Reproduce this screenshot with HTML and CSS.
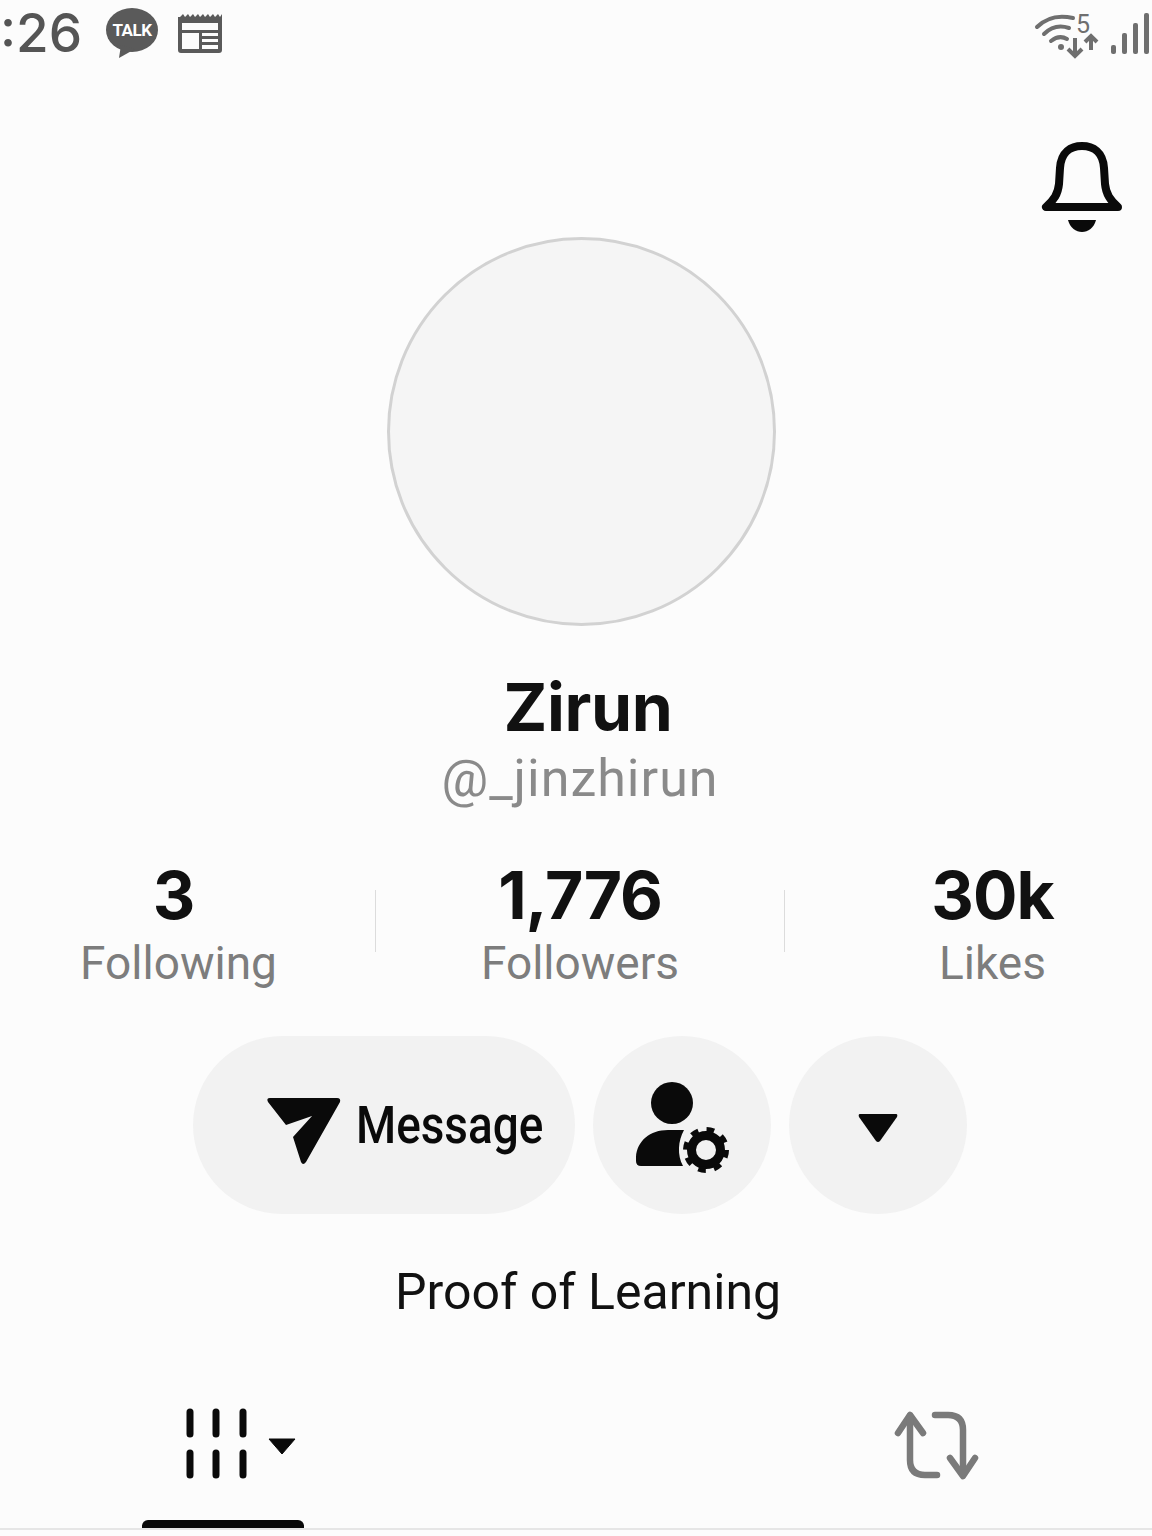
FILE: index.html
```html
<!DOCTYPE html>
<html lang="en">
<head>
  <meta charset="UTF-8" />
  <meta name="viewport" content="width=device-width, initial-scale=1.0" />
  <title>Zirun - Profile</title>
  <link rel="stylesheet" href="styles.css">
</head>
<body>
  <div class="page">
    <!-- status bar -->
    <div class="status-bar">
      <div class="status-left">
        <span class="status-time">:26</span>
        <svg class="icon-talk" width="54" height="52" viewBox="0 0 54 52">
          <ellipse cx="27" cy="23" rx="26" ry="22" fill="#5a5a5a"/>
          <path d="M16 38 L14 51 L30 42 Z" fill="#5a5a5a"/>
          <text x="27" y="29" text-anchor="middle" class="talk-text">TALK</text>
        </svg>
        <svg class="icon-news" width="46" height="42" viewBox="0 0 46 42">
          <path d="M1 5 L1 38 Q1 41 4 41 L42 41 Q45 41 45 38 L45 2 L43 5 L41 2 L38 5 L36 2 L33 5 L31 2 L28 5 L26 2 L23 5 L21 2 L18 5 L16 2 L13 5 L11 2 L8 5 L6 2 L3 5 Z" fill="#5a5a5a"/>
          <rect x="5" y="11" width="36" height="7" fill="#fcfcfc"/>
          <rect x="5" y="21" width="17" height="16" fill="#fcfcfc"/>
          <rect x="25" y="21" width="16" height="3" fill="#fcfcfc"/>
          <rect x="25" y="27" width="16" height="3" fill="#fcfcfc"/>
          <rect x="25" y="33" width="16" height="4" fill="#fcfcfc"/>
        </svg>
      </div>
      <div class="status-right">
        <svg width="66" height="52" viewBox="0 0 66 52">
          <g fill="none" stroke="#6f6f6f" stroke-width="4" stroke-linecap="round">
            <path d="M4 19 C14 9 27 7 40 10"/>
            <path d="M11 26 C18 19 27 17 36 20"/>
            <path d="M18 33 C23 29 29 28 34 31"/>
          </g>
          <circle cx="28" cy="39" r="3" fill="#6f6f6f"/>
          <text x="43" y="25" class="wifi-five">5</text>
          <g fill="none" stroke="#6f6f6f" stroke-width="4">
            <path d="M42 30 V48 M35 41 L42 48 L49 41"/>
            <path d="M58 42 V28 M52 34 L58 28 L64 34"/>
          </g>
        </svg>
        <div class="signal">
          <span class="bar bar-1"></span>
          <span class="bar bar-2"></span>
          <span class="bar bar-3"></span>
          <span class="bar bar-4"></span>
        </div>
      </div>
    </div>

    <div class="top-actions">
      <svg width="84" height="94" viewBox="0 0 84 94">
        <path d="M6 67 H78 C70 60 66 54 65 44 L64 28 C63 12 53 6 42 6 C31 6 21 12 20 28 L19 44 C18 54 14 60 6 67 Z" fill="none" stroke="#0a0a0a" stroke-width="8" stroke-linejoin="round"/>
        <path d="M28 80 H56 C54 88 48 92 42 92 C36 92 30 88 28 80 Z" fill="#0a0a0a"/>
      </svg>
    </div>

    <div class="avatar"></div>

    <h1 class="name">Zirun</h1>
    <div class="handle">@_jinzhirun</div>

    <div class="stats">
      <div class="stat">
        <div class="stat-num stat-num-first">3</div>
        <div class="stat-label">Following</div>
      </div>
      <div class="divider"></div>
      <div class="stat">
        <div class="stat-num">1,776</div>
        <div class="stat-label">Followers</div>
      </div>
      <div class="divider"></div>
      <div class="stat stat-last">
        <div class="stat-num">30k</div>
        <div class="stat-label">Likes</div>
      </div>
    </div>

    <div class="actions">
      <button class="btn btn-message">
        <svg class="plane" width="80" height="72" viewBox="0 0 80 72">
          <path d="M6 3 H73 Q77 3 76 7 L42 67 Q39 71 37 67 L29 42 L48 21 L22 30 L4 7 Q2 3 6 3 Z" fill="#0a0a0a"/>
        </svg>
        <span class="btn-text">Message</span>
      </button>
      <button class="btn btn-round">
        <svg width="100" height="96" viewBox="0 0 100 96">
          <ellipse cx="40" cy="26" rx="21" ry="21" fill="#0a0a0a"/>
          <path d="M4 80 C5 64 18 53 36 53 L52 53 C46 64 45 78 51 89 L9 89 Q4 89 4 84 Z" fill="#0a0a0a"/>
          <circle cx="74" cy="73" r="14.5" fill="none" stroke="#0a0a0a" stroke-width="9"/>
          <circle cx="74" cy="73" r="20" fill="none" stroke="#0a0a0a" stroke-width="6" stroke-dasharray="7.5 8.2"/>
        </svg>
      </button>
      <button class="btn btn-round">
        <svg class="caret" width="40" height="28" viewBox="0 0 40 28">
          <path d="M2 0 H38 Q40 0 39 3 L22 27 Q20 29 18 27 L1 3 Q0 0 2 0 Z" fill="#0a0a0a"/>
        </svg>
      </button>
    </div>

    <div class="bio">Proof of Learning</div>

    <div class="tabs">
      <div class="tab tab-active">
        <div class="tab-icons">
          <svg width="118" height="72" viewBox="0 0 118 72">
            <g fill="none" stroke="#0a0a0a" stroke-width="7" stroke-linecap="round">
              <path d="M48 4 V26 M74 4 V26 M101 4 V26"/>
              <path d="M48 45 V67 M74 45 V67 M101 45 V67"/>
            </g>
          </svg>
          <svg class="tab-caret" width="28" height="17" viewBox="0 0 28 17">
            <path d="M1 1 H27 L14 16 Z" fill="#0a0a0a" stroke="#0a0a0a" stroke-linejoin="round"/>
          </svg>
        </div>
        <div class="tab-line"></div>
      </div>
      <div class="tab">
        <svg width="92" height="72" viewBox="0 0 92 72">
          <g fill="none" stroke="#7a7a7a" stroke-width="6.5" stroke-linecap="round" stroke-linejoin="round">
            <path d="M8 25 L20 7 L33 25"/>
            <path d="M20 8 V52 Q20 67 35 67 H47"/>
            <path d="M45 7 H58 Q73 7 73 22 V66"/>
            <path d="M60 50 L73 68 L85 50"/>
          </g>
        </svg>
      </div>
    </div>
  </div>
</body>
</html>
```

FILE: styles.css
```css
body {
  margin: 0;
  padding: 0;
  background-color: #fcfcfc;
  font-family: "Roboto", "Liberation Sans", sans-serif;
}

.page {
  width: 1152px;
  height: 1536px;
  overflow: hidden;
  display: flex;
  flex-direction: column;
  align-items: center;
}

/* status bar */
.status-bar {
  width: 100%;
  height: 66px;
  box-sizing: border-box;
  display: flex;
  justify-content: space-between;
}

.status-left {
  display: flex;
  align-items: flex-start;
}

.status-time {
  font-family: "Inter", sans-serif;
  font-size: 53px;
  font-weight: 500;
  line-height: 66px;
  color: #555;
  width: 105px;
}

.icon-talk {
  margin-top: 7px;
}

.icon-news {
  margin-top: 12px;
  margin-left: 18px;
}

.talk-text {
  font-size: 17px;
  font-weight: 700;
  fill: #fff;
  font-family: "Roboto", sans-serif;
  letter-spacing: -0.5px;
}

.wifi-five {
  font-size: 25px;
  fill: #6f6f6f;
  font-family: "Roboto", sans-serif;
}

.status-right {
  display: flex;
  align-items: flex-start;
  padding-top: 8px;
  padding-right: 3px;
  box-sizing: border-box;
  gap: 12px;
}

.signal {
  display: flex;
  align-items: flex-end;
  gap: 6px;
  height: 41px;
  margin-top: 5px;
}

.bar {
  width: 5px;
  background-color: #6f6f6f;
  border-radius: 2px;
}

.bar-1 { height: 9px; }
.bar-2 { height: 21px; }
.bar-3 { height: 31px; }
.bar-4 { height: 41px; }

.top-actions {
  width: 100%;
  box-sizing: border-box;
  display: flex;
  justify-content: flex-end;
  padding: 74px 28px 0 0;
  height: 171px;
}

/* profile */
.avatar {
  width: 389px;
  height: 389px;
  box-sizing: border-box;
  border-radius: 50%;
  border: 3px solid #d2d2d2;
  background-color: #f5f5f5;
  margin-left: 10px;
}

.name {
  margin: 41px 0 0 24px;
  font-family: "Inter", sans-serif;
  font-size: 66px;
  font-weight: 700;
  letter-spacing: -0.4px;
  line-height: 80px;
  color: #111;
}

.handle {
  margin: 2px 0 0 8px;
  font-size: 52px;
  letter-spacing: 1px;
  line-height: 60px;
  color: #8a8a8a;
}

.stats {
  width: 100%;
  margin-top: 51px;
  display: grid;
  grid-template-columns: 357px 1px 372px 1px 1fr;
  column-gap: 18px;
  text-align: center;
}

.stat-last {
  padding-left: 30px;
}

.stat-num {
  font-family: "Inter", sans-serif;
  font-size: 66px;
  font-weight: 700;
  letter-spacing: -1px;
  line-height: 70px;
  color: #111;
}

.stat-num-first {
  padding-right: 10px;
}

.stat-label {
  margin-top: 3px;
  font-size: 46px;
  line-height: 60px;
  color: #7d7d7d;
}

.divider {
  width: 1px;
  height: 62px;
  margin-top: 30px;
  background-color: #dcdcdc;
}

/* buttons */
.actions {
  margin-top: 43px;
  margin-left: 8px;
  display: flex;
  gap: 18px;
}

.btn {
  height: 178px;
  border: none;
  padding: 0;
  background-color: #f2f2f2;
  color: #0a0a0a;
  display: flex;
  align-items: center;
  justify-content: center;
  font-family: inherit;
}

.btn-message {
  width: 382px;
  border-radius: 89px;
  justify-content: flex-start;
  gap: 12px;
  padding-left: 71px;
  box-sizing: border-box;
  font-size: 51px;
  font-weight: 500;
}

.plane {
  margin-top: 12px;
}

.btn-text {
  transform: scaleX(0.9);
  transform-origin: left center;
}

.btn-round {
  width: 178px;
  border-radius: 50%;
}

.caret {
  margin-top: 6px;
}

.bio {
  margin: 43px 0 0 24px;
  font-size: 50px;
  line-height: 70px;
  color: #111;
}

/* tabs */
.tabs {
  width: 100%;
  box-sizing: border-box;
  margin-top: 81px;
  padding-left: 142px;
  display: flex;
  gap: 586px;
  border-bottom: 2px solid #e6e6e6;
  height: 122px;
}

.tab-active {
  width: 162px;
  height: 120px;
  display: flex;
  flex-direction: column;
  justify-content: space-between;
}

.tab-icons {
  display: flex;
  align-items: flex-start;
}

.tab-line {
  height: 8px;
  background-color: #0a0a0a;
  border-radius: 6px 6px 0 0;
}

.tab-caret {
  margin-top: 30px;
  margin-left: 8px;
}
```
